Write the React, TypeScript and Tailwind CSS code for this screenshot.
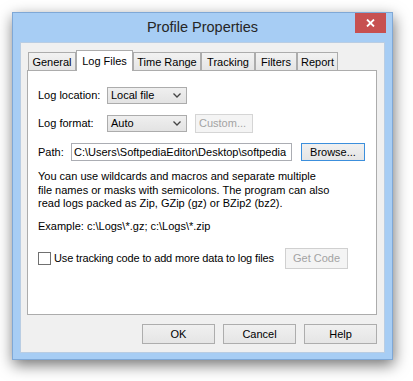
import React from "react";

const tabs = [
  { label: "General", w: "w-[48px]" },
  { label: "Log Files", w: "w-[57px]", active: true },
  { label: "Time Range", w: "w-[68px]" },
  { label: "Tracking", w: "w-[54px]" },
  { label: "Filters", w: "w-[42px]" },
  { label: "Report", w: "w-[41px]" },
];

function Combo({ value }: { value: string }) {
  return (
    <div className="flex items-center justify-between w-[80px] h-[17px] border border-[#acacac] bg-linear-to-b from-[#efefef] to-[#e3e3e3] pl-[3px] pr-[5px]">
      <span>{value}</span>
      <svg width="8" height="5" viewBox="0 0 8 5">
        <path d="M0.5 0.5 L4 4 L7.5 0.5" fill="none" stroke="#444" strokeWidth="1.3" />
      </svg>
    </div>
  );
}

function Button({ children, className = "" }: { children: React.ReactNode; className?: string }) {
  return (
    <div
      className={`flex items-center justify-center border border-[#adadad] bg-linear-to-b from-[#f0f0f0] to-[#e5e5e5] ${className}`}
    >
      {children}
    </div>
  );
}

export default function App() {
  return (
    <div className="w-[413px] h-[381px] bg-white pl-[12px] pt-[12px] font-['Liberation_Sans',Arial,sans-serif] text-[11px] text-black">
      <div className="w-[381px] h-[348px] border border-[#7fa8d6] bg-[#a7cdf4] shadow-[1px_5px_14px_rgba(0,0,0,0.55)] flex flex-col">
        {/* title bar */}
        <div className="grid grid-cols-[1fr_auto_1fr] h-[29px]">
          <div />
          <div className="flex items-center text-[14.5px] text-[#262626] pt-[1px]">Profile Properties</div>
          <div className="flex justify-end items-start pr-[6px]">
            <div className="w-[31px] h-[20px] bg-[#c75050] flex items-center justify-center">
              <svg width="9" height="8" viewBox="0 0 9 8">
                <path d="M1 0.5 L8 7.5 M8 0.5 L1 7.5" stroke="#fff" strokeWidth="1.8" />
              </svg>
            </div>
          </div>
        </div>

        {/* client area */}
        <div className="mx-[7px] w-[365px] h-[311px] bg-[#f0f0f0] border border-[#b9cde3] pt-[7px] px-[6px]">
          <div className="flex items-end h-[20px] pl-[1px]">
            {tabs.map((t) =>
              t.active ? (
                <div
                  key={t.label}
                  className={`${t.w} h-[21px] -mb-px relative z-10 bg-white border border-b-0 border-[#acacac] flex items-start justify-center pt-[2px]`}
                >
                  {t.label}
                </div>
              ) : (
                <div
                  key={t.label}
                  className={`${t.w} h-[18px] bg-linear-to-b from-[#f2f2f2] to-[#e5e5e5] border border-b-0 border-[#acacac] flex items-center justify-center pt-[1px]`}
                >
                  {t.label}
                </div>
              )
            )}
          </div>

          <div className="w-[350px] h-[245px] bg-white border border-[#acacac] pl-[10px] pt-[16px]">
            <div className="flex items-center h-[17px]">
              <span className="w-[69px]">Log location:</span>
              <Combo value="Local file" />
            </div>
            <div className="flex items-center h-[17px] mt-[11px]">
              <span className="w-[69px]">Log format:</span>
              <Combo value="Auto" />
              <div className="ml-[8px] w-[58px] h-[19px] border border-[#d5d5d5] bg-[#f4f4f4] text-[#a3a3a3] flex items-center pl-[3px]">
                Custom...
              </div>
            </div>
            <div className="flex items-center h-[18px] mt-[11px]">
              <span className="w-[33px]">Path:</span>
              <div className="w-[221px] h-[18px] border border-[#abadb3] bg-white pl-[2px] flex items-center overflow-hidden whitespace-nowrap">
                C:\Users\SoftpediaEditor\Desktop\softpedia
              </div>
              <Button className="ml-[9px] w-[64px] h-[18px] !border-[#3c8fdc]">Browse...</Button>
            </div>
            <div className="mt-[9px] leading-[13.5px]">
              You can use wildcards and macros and separate multiple
              <br />
              file names or masks with semicolons. The program can also
              <br />
              read logs packed as Zip, GZip (gz) or BZip2 (bz2).
            </div>
            <div className="mt-[9.5px] leading-[13.5px]">Example: c:\Logs\*.gz; c:\Logs\*.zip</div>
            <div className="flex items-center h-[21px] mt-[14px]">
              <div className="w-[13px] h-[13px] border border-[#707070] bg-white" />
              <span className="ml-[3px] w-[219px] whitespace-nowrap tracking-[-0.15px]">
                Use tracking code to add more data to log files
              </span>
              <div className="ml-[12px] w-[63px] h-[21px] border border-[#d0d0d0] bg-[#f4f4f4] text-[#a3a3a3] flex items-center justify-center">
                Get Code
              </div>
            </div>
          </div>

          <div className="flex justify-end gap-[8px] mt-[9px] pr-[1px]">
            <Button className="w-[73px] h-[20px]">OK</Button>
            <Button className="w-[73px] h-[20px]">Cancel</Button>
            <Button className="w-[73px] h-[20px]">Help</Button>
          </div>
        </div>
      </div>
    </div>
  );
}
